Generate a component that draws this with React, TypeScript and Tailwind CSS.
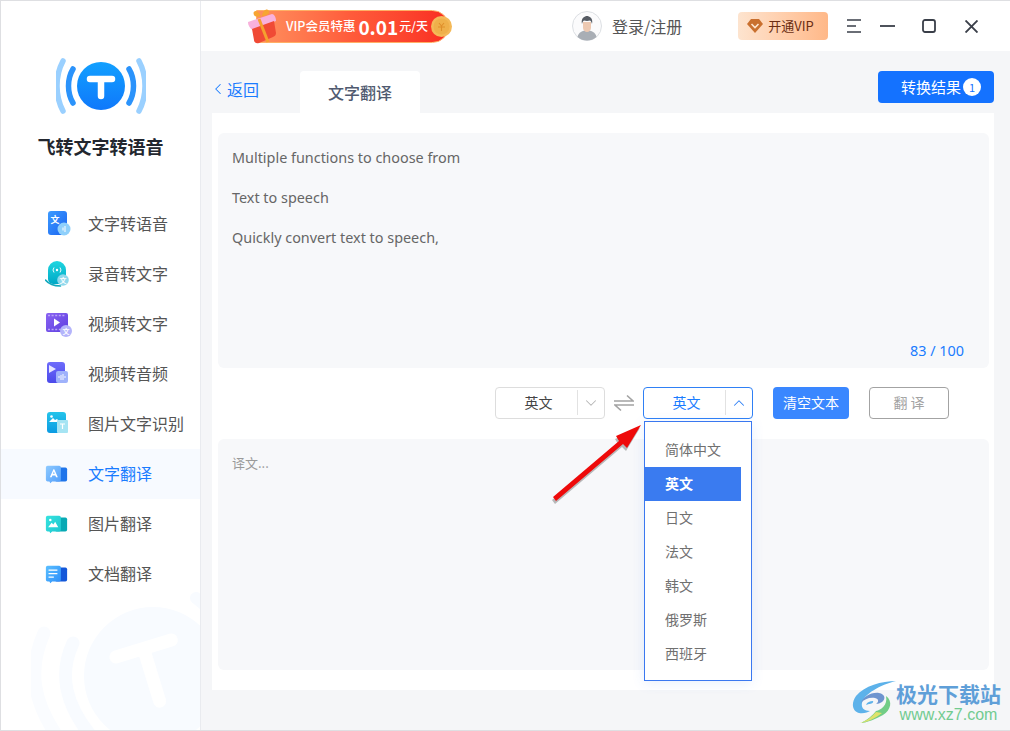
import React from 'react';
import { ChevronDown, ChevronLeft, ChevronUp } from 'lucide-react';

const Glyph = ({ x, y, size, t }: { x: number; y: number; size: number; t: string }) => (
  <text x={x} y={y} fontSize={size} fontWeight="700" fill="#fff" textAnchor="middle" fontFamily="'Noto Sans CJK SC', sans-serif">
    {t}
  </text>
);

// 左侧菜单图标
const IconTts = () => (
  <svg className="ml-[1px]" width="26" height="28" viewBox="0 0 26 28">
    <defs>
      <linearGradient id="tts" x1="0" y1="0" x2="1" y2="1"><stop offset="0" stopColor="#3d9bff" /><stop offset="1" stopColor="#1a63f0" /></linearGradient>
    </defs>
    <rect x="2" y="1" width="19" height="24" rx="3" fill="url(#tts)" />
    <Glyph x={9} y={13} size={9} t="文" />
    <circle cx="18" cy="19" r="6.5" fill="#8fd0fb" />
    <path d="M17 17.5v3M19 16v6" stroke="#fff" strokeWidth="1" />
  </svg>
);
const IconRec = () => (
  <svg width="26" height="28" viewBox="0 0 26 28">
    <defs>
      <linearGradient id="rec" x1="0" y1="0" x2="0" y2="1"><stop offset="0" stopColor="#1fd6e0" /><stop offset="1" stopColor="#00a8c6" /></linearGradient>
    </defs>
    <path d="M3 10a9 9 0 0 1 18 0v9a5 5 0 0 1-5 5H8a5 5 0 0 1-5-5z" fill="url(#rec)" />
    <path d="M0.5 20c4 5 10 6 15 6" stroke="#12a9bd" strokeWidth="1.6" fill="none" strokeLinecap="round" />
    <circle cx="12" cy="10" r="1.2" fill="#fff" />
    <path d="M9 7.5a4 4 0 0 0 0 5M15 7.5a4 4 0 0 1 0 5" stroke="#fff" strokeWidth="0.9" fill="none" />
    <circle cx="18" cy="20" r="5.8" fill="#8fd8ec" />
    <Glyph x={18} y={23} size={7} t="文" />
  </svg>
);
const IconVideo = () => (
  <svg width="28" height="28" viewBox="0 0 28 28">
    <defs>
      <linearGradient id="vid" x1="0" y1="0" x2="1" y2="1"><stop offset="0" stopColor="#8a63f2" /><stop offset="1" stopColor="#5d3fe0" /></linearGradient>
    </defs>
    <rect x="1" y="3" width="22" height="19" rx="2" fill="url(#vid)" />
    <path d="M3 5.5h18M3 19.5h18" stroke="#b9a4f8" strokeWidth="1.5" strokeDasharray="2 1.6" />
    <path d="M9 8.5l6 4-6 4z" fill="#fff" />
    <circle cx="21" cy="21" r="6" fill="#b4b4fb" />
    <Glyph x={21} y={24} size={7} t="文" />
  </svg>
);
const IconVideoAudio = () => (
  <svg width="26" height="28" viewBox="0 0 26 28">
    <defs>
      <linearGradient id="va" x1="0" y1="0" x2="0" y2="1"><stop offset="0" stopColor="#6e6cfb" /><stop offset="1" stopColor="#4b49ea" /></linearGradient>
    </defs>
    <rect x="2" y="2" width="18" height="21" rx="3" fill="url(#va)" />
    <path d="M4 5l7 4-7 4z" fill="#e6e6ff" />
    <rect x="11" y="11" width="12" height="12" rx="2" fill="#9fb2fb" />
    <path d="M14 16v2M16 15v5M18 14v6M20 16v2" stroke="#fff" strokeWidth="0.9" />
  </svg>
);
const IconOcr = () => (
  <svg width="26" height="28" viewBox="0 0 26 28">
    <defs>
      <linearGradient id="ocr" x1="0" y1="0" x2="0" y2="1"><stop offset="0" stopColor="#25c4ea" /><stop offset="1" stopColor="#0a9ae2" /></linearGradient>
    </defs>
    <rect x="2" y="2" width="19" height="21" rx="3" fill="url(#ocr)" />
    <circle cx="6.5" cy="6.5" r="1.3" fill="#fff" />
    <path d="M4 12l4-4 2 2 2-1 3 3z" fill="#fff" />
    <rect x="12" y="10" width="11" height="13" rx="1" fill="#a6e4f3" />
    <path d="M15 14h5M17.5 14v5" stroke="#fff" strokeWidth="1.2" />
  </svg>
);
const Bubble = ({ id, from, to, back, children }: { id: string; from: string; to: string; back: string; children: React.ReactNode }) => (
  <svg width="23" height="25" viewBox="0 0 26 28">
    <defs>
      <linearGradient id={id} x1="0" y1="0" x2="1" y2="1"><stop offset="0" stopColor={from} /><stop offset="1" stopColor={to} /></linearGradient>
    </defs>
    <rect x="11" y="6" width="14" height="16" rx="2" fill={back} />
    <path d="M3 4h13a2 2 0 0 1 2 2v14a2 2 0 0 1-2 2H8l-2 2-1-2H3a2 2 0 0 1-2-2V6a2 2 0 0 1 2-2z" fill={`url(#${id})`} />
    {children}
  </svg>
);
const IconTextTrans = () => (
  <Bubble id="tt" from="#8fcaff" to="#4f9dfb" back="#1f74ea">
    <path d="M9.5 8l-4 9h2l.8-2h3.4l.8 2h2l-4-9zm-.5 5.2l1-2.6 1 2.6z" fill="#fff" />
  </Bubble>
);
const IconImgTrans = () => (
  <Bubble id="it" from="#37e3df" to="#1cc6cf" back="#07a9b4">
    <circle cx="6" cy="9" r="1.4" fill="#fff" />
    <path d="M3.5 17l4-5 2 2 2-3 3.5 6z" fill="#fff" />
  </Bubble>
);
const IconDocTrans = () => (
  <Bubble id="dt" from="#5cc0ff" to="#2a8dfa" back="#1257d9">
    <path d="M4 9h10M4 13h10M4 17h6" stroke="#fff" strokeWidth="1.5" />
  </Bubble>
);

const menu = [
  { label: '文字转语音', icon: <IconTts /> },
  { label: '录音转文字', icon: <IconRec /> },
  { label: '视频转文字', icon: <IconVideo /> },
  { label: '视频转音频', icon: <IconVideoAudio /> },
  { label: '图片文字识别', icon: <IconOcr /> },
  { label: '文字翻译', icon: <IconTextTrans />, active: true },
  { label: '图片翻译', icon: <IconImgTrans /> },
  { label: '文档翻译', icon: <IconDocTrans /> },
];

const langs = ['简体中文', '英文', '日文', '法文', '韩文', '俄罗斯', '西班牙'];

const Logo = () => (
  <svg width="90" height="56" viewBox="0 0 90 56">
    <defs>
      <linearGradient id="logo" x1="0" y1="0" x2="0" y2="1"><stop offset="0" stopColor="#12a0ff" /><stop offset="1" stopColor="#0f78fb" /></linearGradient>
    </defs>
    <circle cx="45" cy="28" r="24" fill="url(#logo)" />
    <path d="M34 21h22M45 21v17" stroke="#fff" strokeWidth="6.5" strokeLinecap="round" />
    <path d="M17 11c-6 10-6 24 0 34M73 11c6 10 6 24 0 34" stroke="#2b93fb" strokeWidth="5.5" fill="none" strokeLinecap="round" />
    <path d="M7 3c-8 15-8 35 0 50M83 3c8 15 8 35 0 50" stroke="#9ad0ff" strokeWidth="5.5" fill="none" strokeLinecap="round" />
  </svg>
);

const Watermark = () => (
  <svg width="170" height="170" viewBox="0 0 170 170">
    <circle cx="122" cy="110" r="69" fill="#f8fbff" />
    <g transform="rotate(-17 122 110)">
      <path d="M92 81h58M121 81v55" stroke="#fff" strokeWidth="13" strokeLinecap="round" />
    </g>
    <path d="M42 77c-14 30-10 62 24 100" stroke="#f8fbff" strokeWidth="13" fill="none" strokeLinecap="round" />
    <path d="M13 67c-16 36-12 70 18 110" stroke="#fafcff" strokeWidth="13" fill="none" strokeLinecap="round" />
    <path d="M165 32l10 8" stroke="#f8fbff" strokeWidth="12" strokeLinecap="round" />
  </svg>
);

const Banner = () => (
  <div className="relative flex h-[34px] w-[202px] items-center">
    <div className="ml-[6px] flex h-[33px] w-[193px] items-center rounded-r-full border border-[#ffb066] bg-gradient-to-r from-[#ff8f5e] via-[#ff5a3a] to-[#f92c22] pl-[29px] text-white">
      <span className="text-[12.5px] font-medium">VIP会员特惠</span>
      <span className="ml-[3px] text-[19px] leading-none font-bold">0.01</span>
      <span className="ml-[1px] text-[12px] font-medium">元/天</span>
    </div>
    <svg className="absolute top-[-2px] left-[-3px]" width="34" height="38" viewBox="0 0 34 38">
      <path d="M1 15l24-8c2 0 4 3 4 7L6 23c-3-1-5-5-5-8z" fill="#f8b1dc" />
      <path d="M5 22l22-8 2 12c0 2-1 3-3 4L12 36c-3 1-5-1-5-3z" fill="#f04a35" />
      <path d="M12 12l9 23" stroke="#f5a02f" strokeWidth="3" />
      <path d="M14 9c-4-8-9-5-7-1 1 2 4 2 7 1zm1 0c1-8 8-8 7-3-1 2-4 3-7 3z" fill="#f7a531" />
    </svg>
    <svg className="absolute top-[7px] right-0" width="21" height="21" viewBox="0 0 21 21">
      <circle cx="10.5" cy="10.5" r="10.5" fill="#f4b958" />
      <circle cx="10.5" cy="10.5" r="8" fill="#efb04a" />
      <path d="M8 7l2.5 3L13 7M7 11h7M10.5 10v5" stroke="#df8f2b" strokeWidth="1.1" fill="none" />
    </svg>
  </div>
);

const Avatar = () => (
  <svg width="30" height="30" viewBox="0 0 30 30">
    <circle cx="15" cy="15" r="14.5" fill="#fbfbfc" stroke="#dcdfe3" />
    <path d="M5.5 26c1-5 5-6.500 9.500-6.500s8.500 1.500 9.500 6.500a14.500 14.500 0 0 1-19 0z" fill="#a9aeb5" />
    <path d="M11 11h8v6c0 2-2 4-4 4s-4-2-4-4z" fill="#edc9b2" />
    <path d="M10 13c-1.500-6 3-8 5-8s6.500 2 5 8c-.5-2-1-3-2-3.500-2 .5-4 .5-6 0-1 .5-1.500 1.500-2 3.500z" fill="#565b63" />
  </svg>
);

const SiteLogo = () => (
  <svg width="46" height="44" viewBox="0 0 46 44" fill="none">
    <path d="M44 1C30 1 12 6 4 16c-5 7-4 15 3 17 5 1 9-1 11-2-6 0-9-3-8-8C12 14 28 5 44 1z" fill="#5db2ea" />
    <path d="M9 23c2-6 10-11 18-10 6 1 7 6 3 9-2 1-4 2-6 2 3-2 3-5-1-6-5-1-11 1-14 5z" fill="#6e95cf" />
    <path d="M14 25c1-3 4-4 7-4 1 2-2 3-4 3z" fill="#5db2ea" />
    <path d="M34 16c7 5 5 14-3 19-7 4-15 7-22 8 6-3 12-8 15-12 5-1 12-6 10-15z" fill="#72cd86" />
    <path d="M8 43c6-2 12-6 16-11l6 1c-6 5-14 9-22 10z" fill="#dfe26a" />
  </svg>
);

const SwapIcon = () => (
  <svg width="20" height="18" viewBox="0 0 20 18" fill="none" stroke="#a3a3a3" strokeWidth="1.6">
    <path d="M0 7h19L13 1.500" />
    <path d="M20 11H1l6 5.500" />
  </svg>
);

const Select = ({ open }: { open?: boolean }) => (
  <div className={`flex h-8 w-[110px] items-center rounded border bg-white ${open ? 'border-[#2f80f5]' : 'border-[#dddddd]'}`}>
    <span className={`w-[81px] pb-[1px] pl-[4px] text-center text-[14px] ${open ? 'text-[#1a7cff]' : 'text-[#444444]'}`}>英文</span>
    <span className="h-[25px] w-px bg-[#e2e2e2]" />
    <span className="flex flex-1 justify-center">
      {open ? <ChevronUp size={18} strokeWidth={1.4} color="#2f80f5" /> : <ChevronDown size={18} strokeWidth={1.4} color="#b5b5b5" />}
    </span>
  </div>
);

export default function App() {
  return (
    <div className="relative flex h-[731px] w-[1010px] overflow-hidden border-t border-l border-b border-[#dedfe2] bg-[#f5f6f8] font-['Noto_Sans_CJK_SC','Noto_Sans',sans-serif]">
      {/* Sidebar */}
      <aside className="relative flex w-[200px] shrink-0 flex-col overflow-hidden border-r border-[#e9ebef] bg-white">
        <div className="absolute top-[565px] left-[30px]">
          <Watermark />
        </div>
        <div className="relative flex flex-col items-center">
          <div className="mt-[57px]">
            <Logo />
          </div>
          <h1 className="mt-[18px] text-[18px] leading-[28px] font-bold text-[#23272f]">飞转文字转语音</h1>
        </div>
        <nav className="relative mt-[39px] flex flex-col">
          {menu.map((m) => (
            <div key={m.label} className={`flex h-[50px] items-center ${m.active ? 'bg-[#f7faff] text-[#1a7cff]' : 'text-[#555555]'}`}>
              <span className="ml-[44px] flex w-[43px] items-center">{m.icon}</span>
              <span className="pb-[2px] text-[16px]">{m.label}</span>
            </div>
          ))}
        </nav>
      </aside>

      <div className="flex min-w-0 flex-1 flex-col">
        {/* Header */}
        <header className="flex h-[50px] shrink-0 items-center bg-white">
          <div className="ml-[49px]">
            <Banner />
          </div>
          <div className="ml-[120px] flex items-center">
            <Avatar />
            <span className="ml-[10px] text-[16px] text-[#555555]">登录/注册</span>
          </div>
          <div className="ml-[56px] flex h-7 w-[90px] items-center rounded bg-gradient-to-r from-[#fde4cf] to-[#ffb888] pl-[9px]">
            <svg width="16" height="14" viewBox="0 0 16 14">
              <path d="M4 0h8l4 5-8 9-8-9z" fill="#c9702f" />
              <path d="M4.500 5L8 8.500 11.500 5" stroke="#fde4cf" strokeWidth="1.6" fill="none" />
            </svg>
            <span className="ml-[5px] text-[13px] text-[#6b2e12]">开通VIP</span>
          </div>
          <svg className="ml-[19px]" width="14" height="14" viewBox="0 0 14 14" stroke="#3a3f49" strokeWidth="1.5">
            <path d="M0 1h14M0 7h9M0 13h14" />
          </svg>
          <svg className="ml-[19px]" width="15" height="14" viewBox="0 0 15 14" stroke="#3a3f49" strokeWidth="1.8">
            <path d="M0 7h15" />
          </svg>
          <svg className="ml-[27px]" width="14" height="14" viewBox="0 0 14 14" fill="none" stroke="#3a3f49" strokeWidth="1.8">
            <rect x="1" y="1" width="12" height="12" rx="2" />
          </svg>
          <svg className="ml-[29px]" width="13" height="13" viewBox="0 0 13 13" stroke="#3a3f49" strokeWidth="1.9">
            <path d="M0.500 0.500l12 12M12.500 0.500l-12 12" />
          </svg>
        </header>

        {/* Tabs */}
        <div className="ml-[11px] flex h-[62px] w-[782px] shrink-0 items-end">
          <div className="mb-[8px] flex h-[32px] w-[88px] items-center text-[#1a7cff]">
            <ChevronLeft className="ml-[-3px]" size={18} strokeWidth={1.4} />
            <span className="text-[16px] leading-none">返回</span>
          </div>
          <div className="flex h-[42px] w-[120px] items-center justify-center rounded-t bg-white text-[16px] font-medium text-[#505a70]">文字翻译</div>
          <div className="mb-[10px] ml-auto flex h-8 w-[116px] items-center rounded bg-[#1472ff] pl-[23px] text-white">
            <span className="text-[15px]">转换结果</span>
            <span className="ml-[2px] flex h-[18px] w-[18px] items-center justify-center rounded-full bg-white text-[11px] text-[#1472ff]">1</span>
          </div>
        </div>

        {/* Card */}
        <main className="ml-[11px] flex h-[577px] w-[782px] flex-col bg-white pt-[20px]">
          <div className="mx-[6px] flex h-[235px] w-[771px] shrink-0 flex-col rounded-md bg-[#f7f8fa] px-[14px] pt-[15px] font-['Noto_Sans','Noto_Sans_CJK_SC',sans-serif] text-[14.4px] leading-[20px] text-[#666666]">
            <p>Multiple functions to choose from</p>
            <p className="mt-[20px]">Text to speech</p>
            <p className="mt-[20px]">Quickly convert text to speech,</p>
            <p className="mt-auto mb-[7px] pr-[11px] text-right text-[#1a7cff]">83 / 100</p>
          </div>

          <div className="mb-[2px] flex h-[69px] shrink-0 items-center pr-[45px] pl-[283px]">
            <Select />
            <span className="mx-[9px] flex">
              <SwapIcon />
            </span>
            <Select open />
            <button className="ml-[20px] h-8 w-[76px] rounded bg-[#3a87ff] text-[14px] text-white">清空文本</button>
            <button className="ml-[20px] h-8 w-[80px] rounded border border-[#a3a3a3] bg-white text-[14px] text-[#a3a3a3]">翻 译</button>
          </div>

          <div className="mx-[6px] h-[231px] w-[771px] shrink-0 rounded-md bg-[#f7f8fa] px-[14px] pt-[14px] text-[13px] leading-[20px] text-[#9a9a9a]">译文...</div>
        </main>
      </div>

      {/* Language dropdown */}
      <div className="absolute top-[420px] left-[643px] h-[260px] w-[108px] border border-[#3a78f0] bg-white pt-[11px] shadow-[0_2px_12px_rgba(58,120,240,0.12)]">
        {langs.map((l) => (
          <div
            key={l}
            className={`flex h-[34px] w-[96px] items-center pb-[2px] pl-[20px] text-[14px] ${l === '英文' ? 'bg-[#3a7bf0] font-bold text-white' : 'text-[#707070]'}`}
          >
            {l}
          </div>
        ))}
      </div>

      {/* Red arrow annotation */}
      <svg className="absolute top-[418px] left-[548px]" width="100" height="90" viewBox="0 0 100 90">
        <path d="M4 78L70 22l-3-5L92 6 78 29l-4-4L7 82z" fill="#777" opacity="0.5" transform="translate(-1 3)" />
        <path d="M4 78L70 22l-3-5L92 6 78 29l-4-4L7 82z" fill="#ee0a0a" />
      </svg>

      {/* Site watermark */}
      <div className="absolute right-[9px] bottom-[6px] flex items-center">
        <SiteLogo />
        <div className="ml-[-2px] flex flex-col items-center">
          <span className="text-[21px] leading-[26px] font-bold text-[#5f9fd8]">极光下载站</span>
          <span className="font-['Liberation_Sans',sans-serif] text-[16px] leading-[18px] text-[#72cb90]">www.xz7.com</span>
        </div>
      </div>
    </div>
  );
}
